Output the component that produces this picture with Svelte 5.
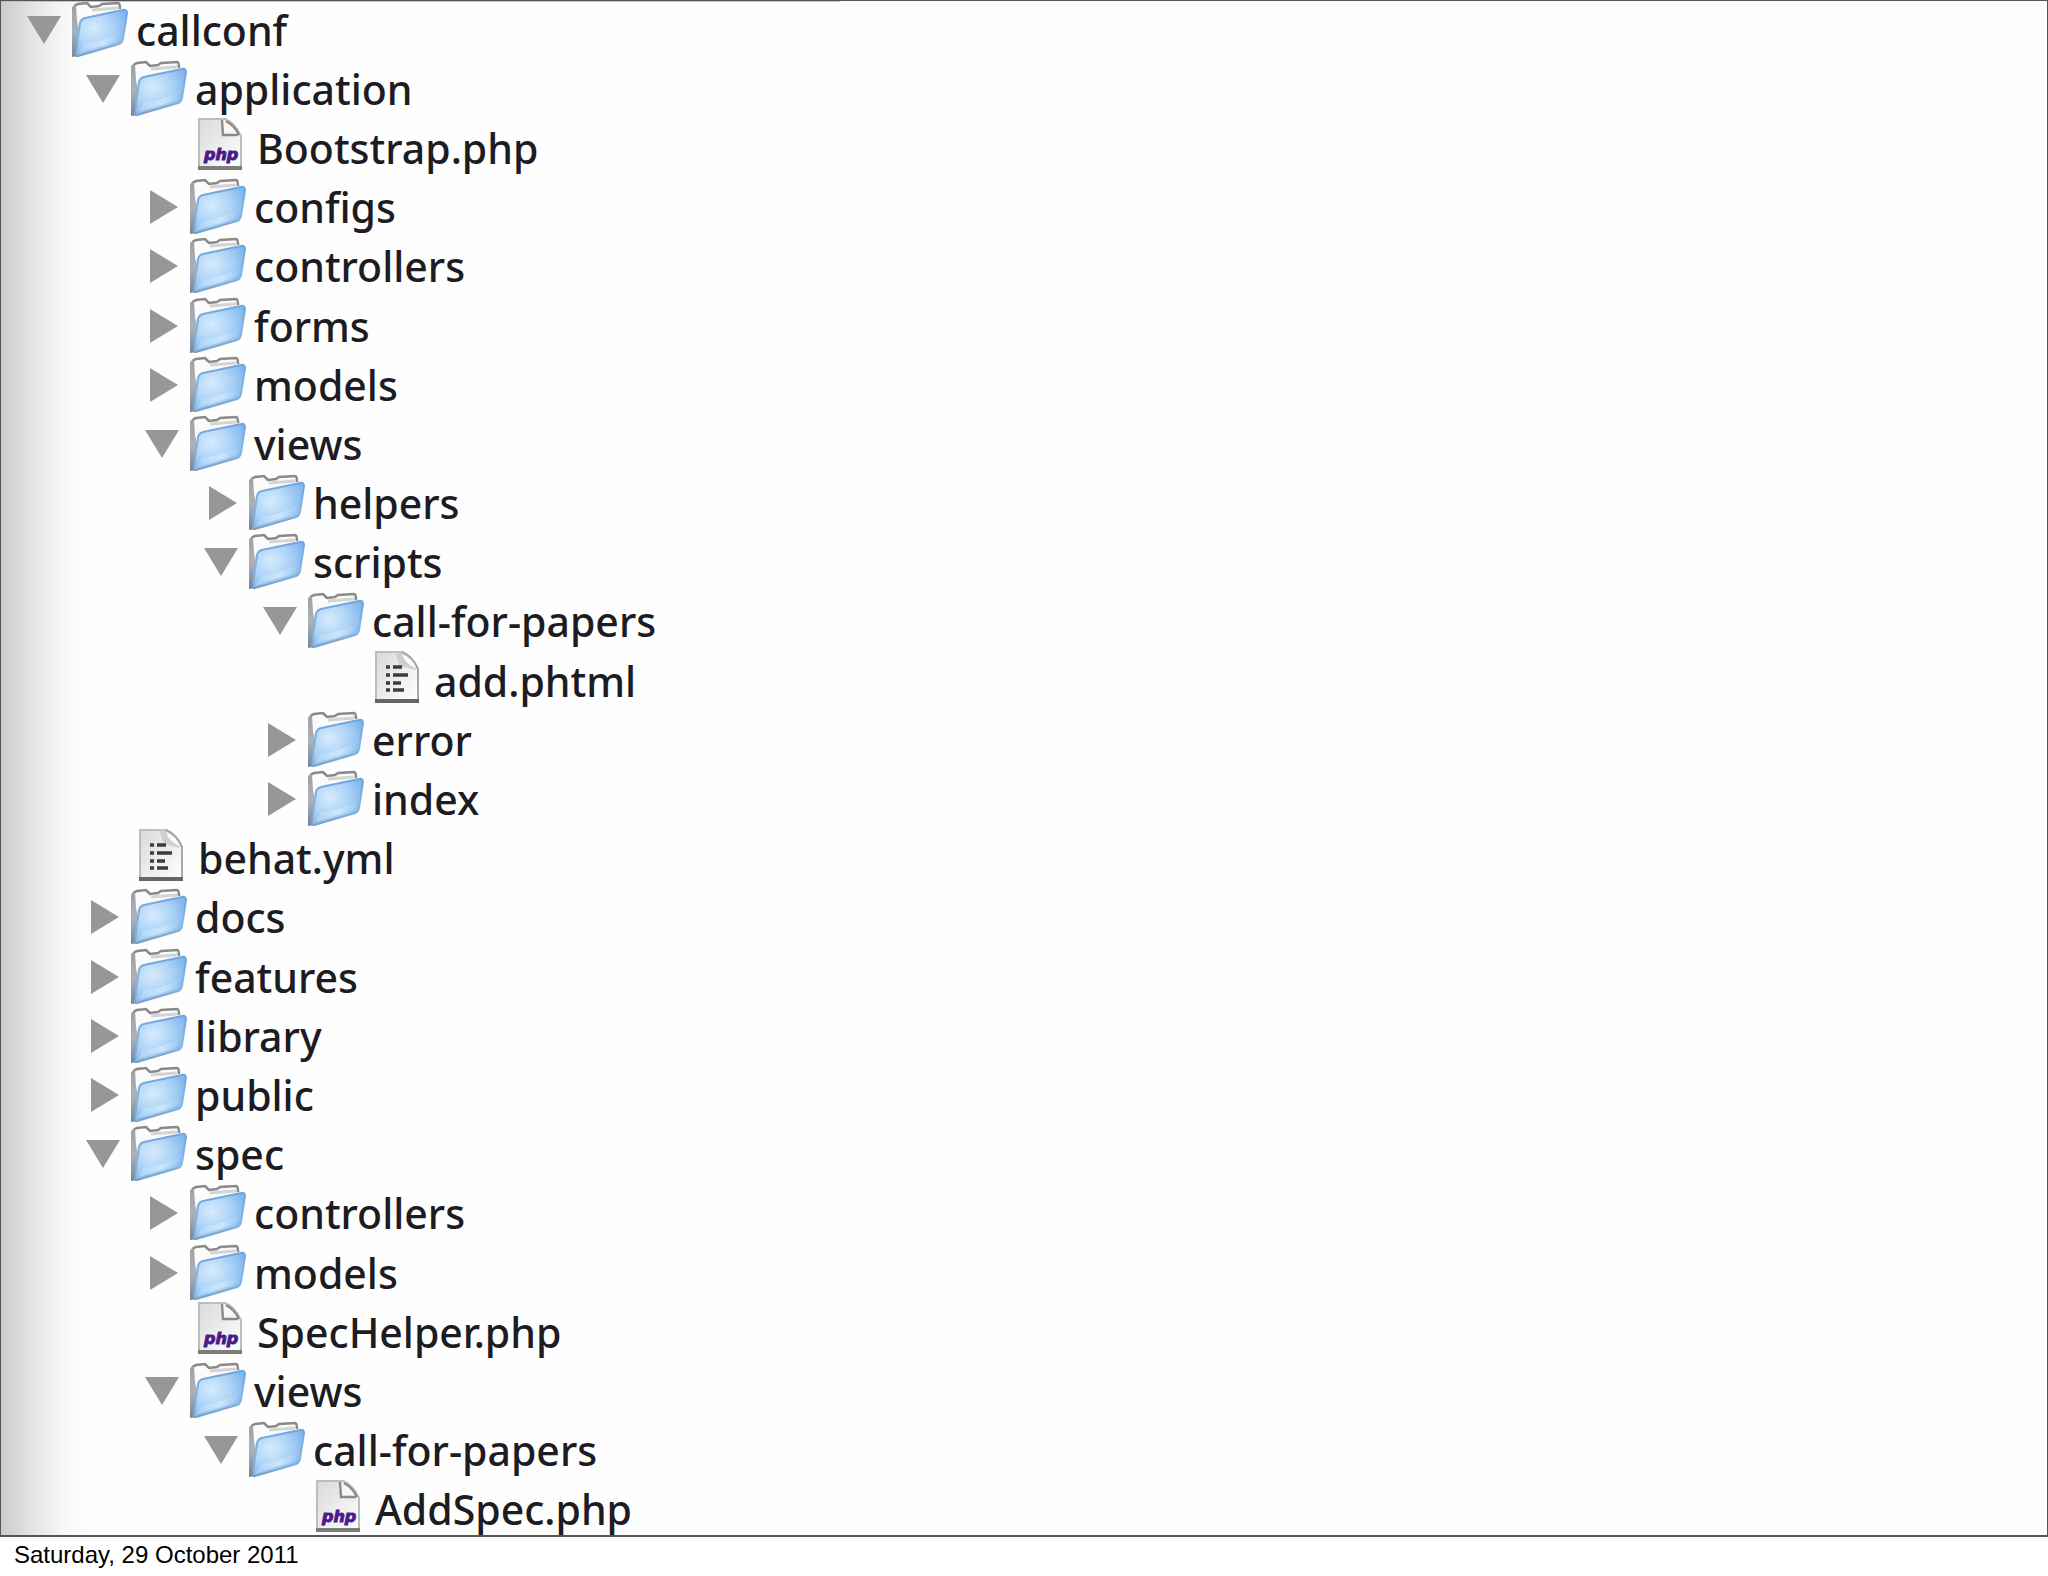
<script lang="ts">
	interface Entry {
		name: string;
		open?: boolean;
		children?: Entry[];
	}

	interface Row {
		entry: Entry;
		depth: number;
	}

	let root: Entry = $state({
		name: 'callconf',
		open: true,
		children: [
			{
				name: 'application',
				open: true,
				children: [
					{ name: 'Bootstrap.php' },
					{ name: 'configs', children: [] },
					{ name: 'controllers', children: [] },
					{ name: 'forms', children: [] },
					{ name: 'models', children: [] },
					{
						name: 'views',
						open: true,
						children: [
							{ name: 'helpers', children: [] },
							{
								name: 'scripts',
								open: true,
								children: [
									{ name: 'call-for-papers', open: true, children: [{ name: 'add.phtml' }] },
									{ name: 'error', children: [] },
									{ name: 'index', children: [] }
								]
							}
						]
					}
				]
			},
			{ name: 'behat.yml' },
			{ name: 'docs', children: [] },
			{ name: 'features', children: [] },
			{ name: 'library', children: [] },
			{ name: 'public', children: [] },
			{
				name: 'spec',
				open: true,
				children: [
					{ name: 'controllers', children: [] },
					{ name: 'models', children: [] },
					{ name: 'SpecHelper.php' },
					{
						name: 'views',
						open: true,
						children: [
							{ name: 'call-for-papers', open: true, children: [{ name: 'AddSpec.php' }] }
						]
					}
				]
			}
		]
	});

	// only the rows that are visible, in display order
	function flatten(entry: Entry, depth = 0): Row[] {
		const rows = [{ entry, depth }];
		if (!entry.open) return rows;
		return rows.concat((entry.children ?? []).flatMap((child) => flatten(child, depth + 1)));
	}

	const rows = $derived(flatten(root));
</script>

{#snippet folderIcon()}
	<svg class="folder" viewBox="0 0 56 56" aria-hidden="true">
		<path d="M1 55V6Q1 4 4 3L15 1L18 5H25L29 2L46 1Q49 1 49 5V30L10 50Z" fill="#fbfbfb" />
		<path
			d="M2 6Q3 4 6 3L15 2L19 6L27 5L30 3L46 2Q48 2 48 8"
			fill="none"
			stroke="#8a8a8a"
			stroke-width="2.6"
		/>
		<path d="M20 9L46 7" stroke="#d4d4d4" stroke-width="3" />
		<path d="M0 6L4 4L5 20L7 30L6 55L0 56Z" fill="url(#spine)" />
		<path
			d="M8 22Q9 18 13 17L51 9Q55 8 55 12L51 38Q50 42 47 43L6 55Q3 56 4 51Z"
			fill="url(#front)"
			stroke="url(#rim)"
			stroke-width="2"
		/>
		<path d="M12 43Q30 41 48 32L47 38Q46 40 43 41L7 52Z" fill="url(#shine)" />
	</svg>
{/snippet}

{#snippet fileIcon(php: boolean)}
	<svg class="file" viewBox="0 0 44 53" aria-hidden="true">
		<path d="M1 1H27Q37 5 43 18V51H1Z" fill="url(#paper)" stroke="#bdbdbd" stroke-width="2" />
		{#if php}
			<path d="M24 2L25 16Q34 14 41 18Q37 7 29 3Z" fill="#f8f8f8" />
			<path d="M24 2L25 17H40M28 3Q37 8 41 17" fill="none" stroke="#8a8a8a" stroke-width="2.4" />
			<path d="M0 50H44" stroke="#7c7c7c" stroke-width="4" />
			<text x="6" y="42">php</text>
		{:else}
			<path d="M20 1L25 15L41 19Q38 7 28 2Z" fill="#cfcfcf" />
			<path d="M27 3Q30 13 42 18Q38 7 27 3Z" fill="#fafafa" />
			<path d="M27 1Q38 6 43 18V50" fill="none" stroke="#a8a8a8" stroke-width="2" />
			<path
				d="M11 16H15M18 16H27M11 24H15M18 24H33M11 32H15M18 32H26M11 39H15M18 39H29"
				stroke="#3c3c3c"
				stroke-width="3.6"
			/>
			<path d="M0 50H44" stroke="#666" stroke-width="4" />
		{/if}
	</svg>
{/snippet}

<!-- gradients shared by all of the icons -->
<svg class="defs" width="0" height="0" aria-hidden="true">
	<defs>
		<radialGradient id="front" cx="0.35" cy="0.4" r="0.7">
			<stop offset="0" stop-color="#d6ebfd" />
			<stop offset="0.5" stop-color="#b0d5f7" />
			<stop offset="1" stop-color="#7db4ec" />
		</radialGradient>
		<linearGradient id="rim" x1="0" y1="0" x2="0" y2="1">
			<stop offset="0" stop-color="#6fa4de" />
			<stop offset="0.6" stop-color="#86b6e6" />
			<stop offset="1" stop-color="#7d9fc0" />
		</linearGradient>
		<linearGradient id="shine" x1="0" y1="0" x2="1" y2="0">
			<stop offset="0" stop-color="#c4e2fc" stop-opacity="0.4" />
			<stop offset="0.6" stop-color="#d2eaff" stop-opacity="0.8" />
			<stop offset="1" stop-color="#b4d8f8" stop-opacity="0.2" />
		</linearGradient>
		<linearGradient id="spine" x1="0" y1="0" x2="0" y2="1">
			<stop offset="0" stop-color="#a0a0a0" />
			<stop offset="0.5" stop-color="#adb2b8" />
			<stop offset="1" stop-color="#70859c" />
		</linearGradient>
		<linearGradient id="paper" x1="0" y1="0" x2="1" y2="1">
			<stop offset="0" stop-color="#dadada" />
			<stop offset="0.5" stop-color="#ececec" />
			<stop offset="1" stop-color="#ffffff" />
		</linearGradient>
	</defs>
</svg>

<div class="page">
	<main class="slide">
		<ul class="tree">
			{#each rows as { entry, depth }}
				<li style:--depth={depth}>
					{#if entry.children}
						<button class="row" aria-expanded={!!entry.open} onclick={() => (entry.open = !entry.open)}>
							<svg class="arrow" viewBox="0 0 34 34" aria-hidden="true">
								<path d={entry.open ? 'M0 3H34L17 31Z' : 'M5 0V34L33 17Z'} />
							</svg>
							{@render folderIcon()}
							<span>{entry.name}</span>
						</button>
					{:else}
						<div class="row leaf">
							{@render fileIcon(entry.name.endsWith('.php'))}
							<span>{entry.name}</span>
						</div>
					{/if}
				</li>
			{/each}
		</ul>
	</main>
	<footer>Saturday, 29 October 2011</footer>
</div>

<style>
	:global(body) {
		margin: 0;
		background-color: #fff;
	}

	.defs {
		position: absolute;
	}

	.page {
		display: flex;
		flex-direction: column;
		height: 100vh;
	}

	.slide {
		flex: 1;
		min-height: 0;
		overflow: hidden;
		border: 1px solid #555456;
		border-bottom-width: 2px;
		background:
			linear-gradient(#c0c0c0, #c0c0c0) 0 0 / 41% 1px no-repeat,
			linear-gradient(
				to right,
				#cacaca 0,
				#d5d5d5 12px,
				#e4e4e4 32px,
				#f3f3f3 56px,
				#fbfbfb 76px,
				#fefefe 96px
			);
	}

	/* the full tree runs just past both edges of the slide */
	.tree {
		margin: -1px 0 0;
		padding: 0;
		list-style: none;
	}

	li {
		height: calc((100vh - 37px) / 26);
	}

	.row {
		display: flex;
		align-items: center;
		width: 100%;
		height: 100%;
		margin: 0;
		padding: 0 0 0 calc(26px + var(--depth) * 59px);
		box-sizing: border-box;
		border: none;
		background: none;
		color: #1c1c22;
		font-family: 'Lucida Grande', 'Noto Sans', sans-serif;
		font-size: 41px;
		font-weight: 500;
		line-height: 56px;
		text-align: left;
		white-space: nowrap;
	}

	.leaf {
		padding-left: calc(79px + var(--depth) * 59px);
	}

	svg {
		flex: none;
	}

	.arrow {
		width: 34px;
		height: 34px;
		margin-right: 11px;
		fill: #979797;
	}

	.folder {
		width: 56px;
		height: 56px;
		margin-right: 8px;
		margin-bottom: 2px;
	}

	.file {
		width: 44px;
		height: 53px;
		margin-right: 15px;
		margin-bottom: 6px;
	}

	.file text {
		fill: #4b1a8c;
		stroke: #4b1a8c;
		font-family: 'DejaVu Sans', sans-serif;
		font-size: 16px;
		font-style: italic;
		font-weight: bold;
	}

	footer {
		height: 39px;
		padding-left: 14px;
		color: #000;
		font-family: 'Liberation Sans', Arial, sans-serif;
		font-size: 24px;
		line-height: 36px;
	}
</style>
